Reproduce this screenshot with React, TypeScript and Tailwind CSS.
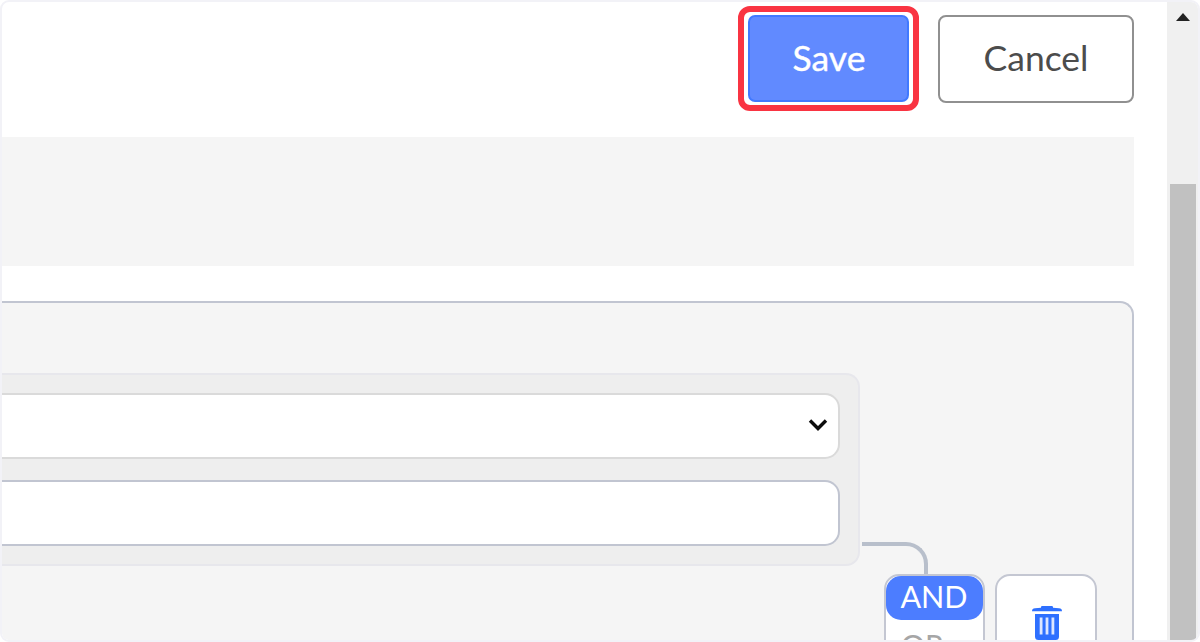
function Header() {
  return (
    <div className="flex h-[135px] shrink-0 items-start justify-end gap-[19px] pt-[4px] pr-[33px]">
      <div className="flex h-[105px] w-[181px] rounded-[12px] border-[6px] border-[#f93442] bg-white p-[4px] pt-[3px] pb-[3px]">
        <button className="h-[87px] w-full rounded-[7px] border-2 border-[#4179ff] bg-[#618aff] pb-[1px] pl-[1px] text-[35.5px] leading-none text-white">
          <span className="inline-block [-webkit-text-stroke:0.4px_white]">Save</span>
        </button>
      </div>
      <button className="mt-[9px] h-[88px] w-[196px] rounded-[8px] border-2 border-[#909090] bg-white pb-[3px] text-[35.5px] leading-none text-[#4c4c4c]">
        Cancel
      </button>
    </div>
  );
}

function ConditionPanel() {
  return (
    <div className="flex h-[193px] w-[858px] shrink-0 flex-col gap-[21px] rounded-r-[14px] border-2 border-l-0 border-[#e7e7ec] bg-[#eeeeee] pt-[18px] pr-[18px]">
      <div className="flex h-[66px] shrink-0 items-center justify-end rounded-r-[15px] border-2 border-l-0 border-[#dadada] bg-white pr-[10px] pb-[2px]">
        <svg width="20" height="14" viewBox="0 0 20 14" fill="none">
          <path d="M2 2.5L10 10.5L18 2.5" stroke="#0c0c0c" strokeWidth="3.4" />
        </svg>
      </div>
      <div className="h-[66px] shrink-0 rounded-r-[15px] border-2 border-l-0 border-[#c1c5d1] bg-white" />
    </div>
  );
}

function Operators() {
  return (
    <div className="flex gap-[10px]">
      <div className="h-[120px] w-[101px] rounded-[15px] border-2 border-[#c4c7d2] bg-white">
        <div className="flex h-[44px] items-center justify-center rounded-[15px] bg-[#4c7dff] pr-[1px] pb-[3px] text-[30.5px] leading-none text-white">
          AND
        </div>
        <div className="pt-[7px] pl-[15px] text-[30px] leading-[36px] text-[#a6a6a6]">OR</div>
      </div>
      <div className="flex h-[120px] w-[102px] justify-center rounded-[15px] border-2 border-[#c4c7d2] bg-white pt-[30px] pl-[2px]">
        <svg width="30" height="36" viewBox="0 0 30 36" fill="#2e70ff">
          <path d="M10.5 0h9a1.5 1.5 0 0 1 1.5 1.8L27 2.2a3 3 0 0 1 3 3H0a3 3 0 0 1 3-3l6-.4A1.5 1.5 0 0 1 10.5 0zM3 8h24v22.5a3.5 3.5 0 0 1-3.5 3.5h-17A3.5 3.5 0 0 1 3 30.5z" />
          <path d="M7.7 11.5h2.8v17H7.7zM13.6 11.5h2.8v17h-2.8zM19.5 11.5h2.8v17h-2.8z" fill="#dce6ff" />
        </svg>
      </div>
    </div>
  );
}

function RuleCard() {
  return (
    <div className="mt-[35px] flex h-[400px] w-[1132px] shrink-0 items-start rounded-tr-[14px] border-t-2 border-r-2 border-[#c1c5d1] bg-[#f5f5f5] pt-[70px]">
      <ConditionPanel />
      <div className="flex flex-col pt-[169px]">
        <div className="ml-[2px] h-[32px] w-[65.5px] rounded-tr-[22px] border-t-[4px] border-r-[4px] border-[#b8bfcb]" />
        <div className="ml-[24px]">
          <Operators />
        </div>
      </div>
    </div>
  );
}

function Scrollbar() {
  return (
    <div className="flex w-[31px] shrink-0 flex-col items-center bg-[#f0f0f0] pt-[11px]">
      <svg width="14" height="8" viewBox="0 0 14 8">
        <path d="M7 0L14 8H0z" fill="#222" />
      </svg>
      <div className="mt-[163px] w-[26px] grow bg-[#c1c1c1]" />
    </div>
  );
}

export default function App() {
  return (
    <div className="h-[642px] w-[1200px] overflow-hidden bg-white font-['Lato',sans-serif]">
      <div className="flex h-full w-full overflow-hidden rounded-[9px] border-2 border-[#f2f2f7] bg-white">
        <main className="flex min-w-0 grow flex-col overflow-hidden">
          <Header />
          <div className="h-[129px] w-[1132px] shrink-0 bg-[#f5f5f5]" />
          <RuleCard />
        </main>
        <Scrollbar />
      </div>
    </div>
  );
}
